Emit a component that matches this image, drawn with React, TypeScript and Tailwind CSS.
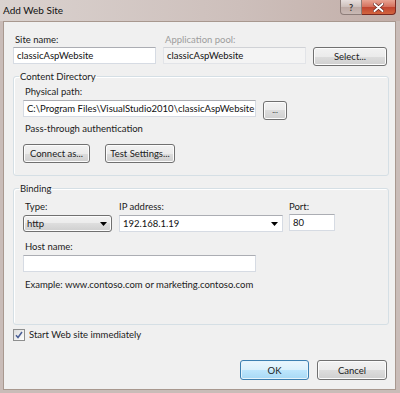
import type { ReactNode } from 'react'

const font = { fontFamily: 'Lato, "Noto Sans", sans-serif' }

function Label({ children, muted }: { children: ReactNode; muted?: boolean }) {
  return (
    <div
      className={`ml-[2px] h-[13px] whitespace-nowrap leading-[13px] ${muted ? 'text-[#9d9d9d]' : 'text-[#1b1b1b]'}`}
    >
      {children}
    </div>
  )
}

function TextBox({ value, className, disabled }: { value?: string; className: string; disabled?: boolean }) {
  return (
    <div
      className={`flex h-[17px] items-center overflow-hidden whitespace-nowrap border border-[#d6dbe3] border-t-[#abadb3] px-[3px] leading-[13px] text-[#111] ${
        disabled ? 'bg-[#f4f4f4]' : 'bg-white'
      } ${className}`}
    >
      {value}
    </div>
  )
}

function Button({ children, className, focused }: { children: ReactNode; className: string; focused?: boolean }) {
  return (
    <div
      className={`flex items-center whitespace-nowrap rounded-[3px] border leading-[13px] text-[#1b1b1b] ${
        focused
          ? 'border-[#3c7fb1] bg-[linear-gradient(#eaf6fd_0%,#d9f0fc_50%,#bee6fd_50%,#a7d9f5_100%)] shadow-[inset_0_0_0_1px_#e5f4fc]'
          : 'border-[#707070] bg-[linear-gradient(#f2f2f2_0%,#ebebeb_50%,#dddddd_50%,#cfcfcf_100%)] shadow-[inset_0_0_0_1px_#fcfcfc]'
      } ${className}`}
    >
      {children}
    </div>
  )
}

function Arrow() {
  return (
    <svg width="7" height="4" viewBox="0 0 7 4" className="shrink-0">
      <path d="M0 0h7L3.5 4z" fill="#000" />
    </svg>
  )
}

function Group({ title, children, className }: { title: string; children: ReactNode; className: string }) {
  return (
    <fieldset className={`rounded-[3px] border border-[#d5dfe5] pl-[9px] shadow-[inset_1px_1px_0_#fff] ${className}`}>
      <legend className="ml-[-4px] px-[1px] leading-[13px] text-[#1b1b1b]">{title}</legend>
      {children}
    </fieldset>
  )
}

export default function App() {
  return (
    <div className="flex h-[393px] w-[400px] flex-col bg-[#c9bcb8] text-[9.5px]" style={font}>
      {/* title bar */}
      <div className="flex h-[21px] shrink-0 items-start bg-[linear-gradient(90deg,#dad2cf,#cdbfbb_60%,#c2aea8)]">
        <div className="ml-[3px] mt-[3px] text-[10px] leading-[14px] text-[#111]">Add Web Site</div>
        <div className="ml-auto mr-[4px] flex">
          <div className="flex h-[15px] w-[22px] items-center justify-center rounded-bl-[4px] border border-t-0 border-[#8d7d79] bg-[linear-gradient(#e6dedc,#cdbfbb_50%,#bdaaa5_50%,#c9b9b4)] text-[9px] font-bold leading-none text-[#333]">
            ?
          </div>
          <div className="flex h-[15px] w-[34px] items-center justify-center rounded-br-[4px] border border-l-0 border-t-0 border-[#7a2a22] bg-[linear-gradient(#e8a493,#d4705c_50%,#c0432f_50%,#d2653f)]">
            <svg width="11" height="9" viewBox="0 0 11 9">
              <path d="M1.5 1l8 7M9.5 1l-8 7" stroke="#5a1d17" strokeWidth="3.2" strokeLinecap="round" />
              <path d="M1.5 1l8 7M9.5 1l-8 7" stroke="#fff" strokeWidth="2" strokeLinecap="round" />
            </svg>
          </div>
        </div>
      </div>

      {/* client area */}
      <div className="mb-[3px] ml-[3px] mr-[4px] flex flex-1 flex-col border border-[#a8988f] bg-[#f0f0f0] pb-[9px] pl-[9px] pr-[6px] pt-[11px]">
        {/* site name row */}
        <div className="flex gap-[7px]">
          <div className="flex w-[143px] flex-col gap-[1px]">
            <Label>Site name:</Label>
            <TextBox value="classicAspWebsite" className="w-[143px]" />
          </div>
          <div className="flex w-[143px] flex-col gap-[1px]">
            <Label muted>Application pool:</Label>
            <TextBox value="classicAspWebsite" className="w-[143px] border-[#e2e4e8] border-t-[#d0d2d6]" disabled />
          </div>
          <Button className="mt-[14px] h-[19px] w-[74px] justify-center">Select...</Button>
        </div>

        {/* content directory */}
        <Group title="Content Directory" className="mt-[4px] h-[106px]">
          <div className="mt-[2px] flex flex-col">
            <Label>Physical path:</Label>
            <div className="mt-[2px] flex items-start gap-[7px]">
              <TextBox value="C:\Program Files\VisualStudio2010\classicAspWebsite" className="w-[233px]" />
              <Button className="mt-[1px] h-[19px] w-[24px] justify-center text-[8px]">...</Button>
            </div>
            <div className="mt-[2px]">
              <Label>Pass-through authentication</Label>
            </div>
            <div className="mt-[9px] flex gap-[15px]">
              <Button className="h-[19px] w-[67px] justify-center">Connect as...</Button>
              <Button className="h-[19px] w-[70px] justify-center">Test Settings...</Button>
            </div>
          </div>
        </Group>

        {/* binding */}
        <Group title="Binding" className="mt-[6px] h-[143px]">
          <div className="mt-[5px] flex items-start">
            <div className="flex w-[89px] flex-col gap-[2px]">
              <Label>Type:</Label>
              <Button className="h-[17px] w-[89px] justify-between rounded-[2px] pl-[3px] pr-[4px]">
                <span>http</span>
                <Arrow />
              </Button>
            </div>
            <div className="ml-[7px] flex w-[164px] flex-col gap-[2px]">
              <div className="-ml-[2px]">
                <Label>IP address:</Label>
              </div>
              <div className="flex h-[17px] w-[164px] items-center justify-between border border-[#d6dbe3] border-t-[#abadb3] bg-white pl-[3px] pr-[4px] leading-[13px] text-[#111]">
                <span>192.168.1.19</span>
                <Arrow />
              </div>
            </div>
            <div className="ml-[6px] flex w-[46px] flex-col gap-[1px]">
              <div className="-ml-[2px]">
                <Label>Port:</Label>
              </div>
              <TextBox value="80" className="w-[46px] border-[#c5daed] border-t-[#3d7bad]" />
            </div>
          </div>
          <div className="mt-[8px] flex flex-col gap-[2px]">
            <Label>Host name:</Label>
            <TextBox className="w-[233px]" />
          </div>
          <div className="mt-[6px]">
            <Label>Example: www.contoso.com or marketing.contoso.com</Label>
          </div>
        </Group>

        {/* start immediately */}
        <div className="mt-[3px] flex items-center">
          <div className="flex h-[12px] w-[12px] items-center justify-center border border-[#8e8f8f] bg-[linear-gradient(135deg,#dcdcdc,#ffffff)]">
            <svg width="8" height="8" viewBox="0 0 8 8">
              <path d="M1 4.2l2 2.3L7 1" stroke="#4b5f96" strokeWidth="1.5" fill="none" />
            </svg>
          </div>
          <div className="ml-[2px]">
            <Label>Start Web site immediately</Label>
          </div>
        </div>

        {/* dialog buttons */}
        <div className="mt-auto mr-[2px] flex justify-end gap-[8px]">
          <Button className="h-[20px] w-[69px] justify-center" focused>
            OK
          </Button>
          <Button className="h-[20px] w-[70px] justify-center">Cancel</Button>
        </div>
      </div>
    </div>
  )
}
